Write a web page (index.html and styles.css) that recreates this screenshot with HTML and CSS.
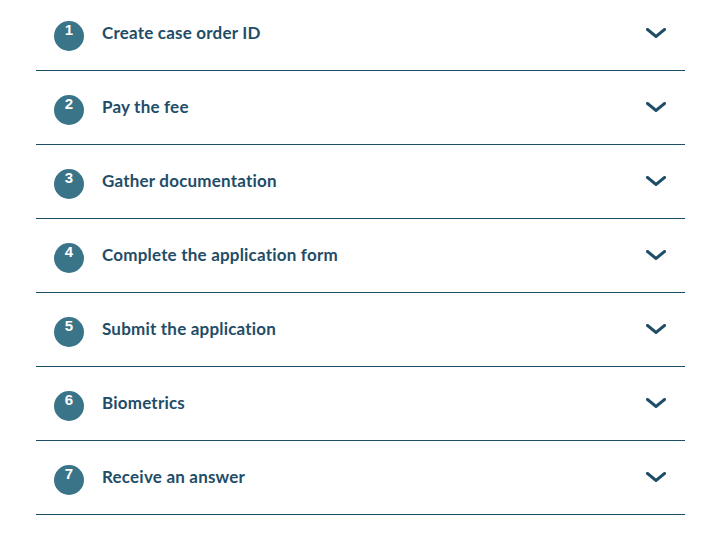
FILE: index.html
```html
<!DOCTYPE html>
<html lang="en">
<head>
<meta charset="utf-8">
<link rel="stylesheet" href="styles.css">
<title>Steps</title>
</head>
<body>
<ul class="steps">
  <li class="step"><span class="num">1</span><span class="title">Create case order ID</span><svg class="chev" viewBox="0 0 20 10" width="20" height="10"><path d="M1.5 1.5 L10 8.5 L18.5 1.5"/></svg></li>
  <li class="step"><span class="num">2</span><span class="title">Pay the fee</span><svg class="chev" viewBox="0 0 20 10" width="20" height="10"><path d="M1.5 1.5 L10 8.5 L18.5 1.5"/></svg></li>
  <li class="step"><span class="num">3</span><span class="title">Gather documentation</span><svg class="chev" viewBox="0 0 20 10" width="20" height="10"><path d="M1.5 1.5 L10 8.5 L18.5 1.5"/></svg></li>
  <li class="step"><span class="num">4</span><span class="title">Complete the application form</span><svg class="chev" viewBox="0 0 20 10" width="20" height="10"><path d="M1.5 1.5 L10 8.5 L18.5 1.5"/></svg></li>
  <li class="step"><span class="num">5</span><span class="title">Submit the application</span><svg class="chev" viewBox="0 0 20 10" width="20" height="10"><path d="M1.5 1.5 L10 8.5 L18.5 1.5"/></svg></li>
  <li class="step"><span class="num">6</span><span class="title">Biometrics</span><svg class="chev" viewBox="0 0 20 10" width="20" height="10"><path d="M1.5 1.5 L10 8.5 L18.5 1.5"/></svg></li>
  <li class="step"><span class="num">7</span><span class="title">Receive an answer</span><svg class="chev" viewBox="0 0 20 10" width="20" height="10"><path d="M1.5 1.5 L10 8.5 L18.5 1.5"/></svg></li>
</ul>
</body>
</html>
```
FILE: styles.css
```css
html, body {
  margin: 0;
  padding: 0;
  background: #ffffff;
}
body {
  font-family: Lato, "Open Sans", "DejaVu Sans", sans-serif;
}
.steps {
  list-style: none;
  margin: -3px 0 0 36px;
  padding: 0;
  width: 649px;
}
.step {
  display: flex;
  align-items: center;
  height: 73px;
  border-bottom: 1px solid #1d4d66;
  padding-left: 18px;
  padding-right: 19px;
}
.num {
  flex: none;
  width: 30px;
  height: 30px;
  margin-top: 4px;
  border-radius: 50%;
  background: #3a7489;
  color: #fff;
  font-family: "Liberation Sans", Arial, sans-serif;
  font-weight: 700;
  font-size: 15px;
  line-height: 18px;
  text-align: center;
}
.title {
  flex: 1;
  margin-left: 18px;
  color: #1f4d68;
  font-weight: 700;
  font-size: 17px;
  letter-spacing: 0.2px;
  margin-top: -3px;
}
.chev {
  flex: none;
  fill: none;
  stroke: #1f4d68;
  stroke-width: 3;
  stroke-linecap: square;
  margin-top: -2px;
}
```
